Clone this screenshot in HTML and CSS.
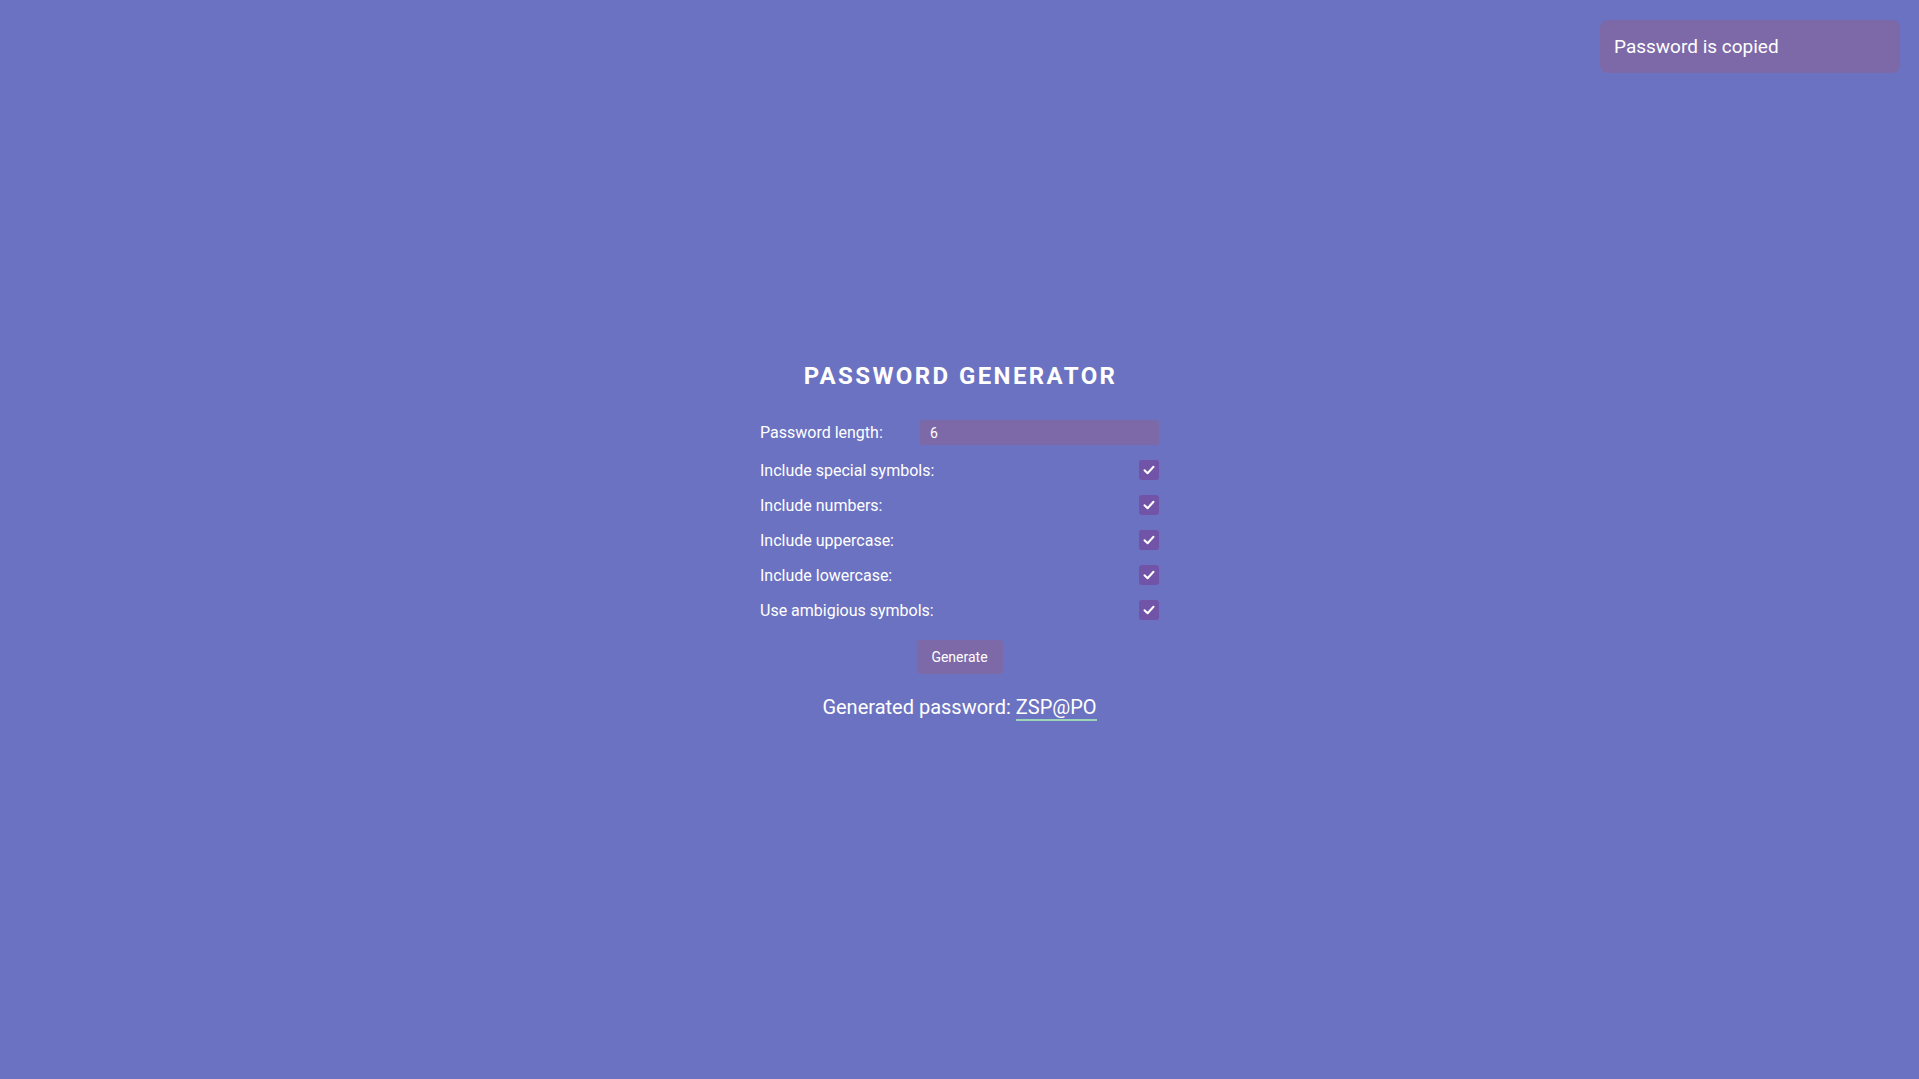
FILE: index.html
```html
<!DOCTYPE html>
<html lang="en">
<head>
<meta charset="utf-8">
<title>Password Generator</title>
<link rel="stylesheet" href="styles.css">
</head>
<body>
<div class="toast">Password is copied</div>
<main class="app">
  <h1 class="title">PASSWORD GENERATOR</h1>
  <div class="form">
    <div class="row">
      <label class="label">Password length:</label>
      <div class="input">6</div>
    </div>
    <div class="row">
      <label class="label">Include special symbols:</label>
      <span class="check"><svg viewBox="0 0 20 20" width="20" height="20"><polyline points="5.5,10.2 8.6,13.2 14.5,6.8" fill="none" stroke="#fff" stroke-width="2" stroke-linecap="round" stroke-linejoin="round"/></svg></span>
    </div>
    <div class="row">
      <label class="label">Include numbers:</label>
      <span class="check"><svg viewBox="0 0 20 20" width="20" height="20"><polyline points="5.5,10.2 8.6,13.2 14.5,6.8" fill="none" stroke="#fff" stroke-width="2" stroke-linecap="round" stroke-linejoin="round"/></svg></span>
    </div>
    <div class="row">
      <label class="label">Include uppercase:</label>
      <span class="check"><svg viewBox="0 0 20 20" width="20" height="20"><polyline points="5.5,10.2 8.6,13.2 14.5,6.8" fill="none" stroke="#fff" stroke-width="2" stroke-linecap="round" stroke-linejoin="round"/></svg></span>
    </div>
    <div class="row">
      <label class="label">Include lowercase:</label>
      <span class="check"><svg viewBox="0 0 20 20" width="20" height="20"><polyline points="5.5,10.2 8.6,13.2 14.5,6.8" fill="none" stroke="#fff" stroke-width="2" stroke-linecap="round" stroke-linejoin="round"/></svg></span>
    </div>
    <div class="row">
      <label class="label">Use ambigious symbols:</label>
      <span class="check"><svg viewBox="0 0 20 20" width="20" height="20"><polyline points="5.5,10.2 8.6,13.2 14.5,6.8" fill="none" stroke="#fff" stroke-width="2" stroke-linecap="round" stroke-linejoin="round"/></svg></span>
    </div>
  </div>
  <button class="btn">Generate</button>
  <p class="result">Generated password: <span class="pass">ZSP@PO</span></p>
</main>
</body>
</html>
```
FILE: styles.css
```css
html, body {
  margin: 0;
  height: 100%;
}
body {
  background: #6b72c1;
  font-family: Roboto, "Noto Sans", sans-serif;
  color: #fff;
  display: flex;
  align-items: center;
  justify-content: center;
}
.toast {
  position: fixed;
  top: 20px;
  right: 19px;
  width: 300px;
  box-sizing: border-box;
  height: 53px;
  padding: 0 14px;
  display: flex;
  align-items: center;
  background: #7d69a8;
  border-radius: 8px;
  font-size: 19px;
}
.app {
  width: 399px;
  display: flex;
  flex-direction: column;
  align-items: center;
  padding-top: 2px;
}
.title {
  margin: 0 0 30px;
  font-size: 24px;
  font-weight: 700;
  letter-spacing: 2.4px;
  line-height: 28px;
  padding-left: 2px;
}
.form {
  width: 100%;
  display: flex;
  flex-direction: column;
  gap: 15px;
}
.row {
  display: flex;
  align-items: center;
  justify-content: space-between;
  font-size: 16px;
}
.label {
  line-height: 19px;
}
.input {
  width: 239px;
  height: 25px;
  box-sizing: border-box;
  padding: 0 10px;
  background: #7d69a8;
  border-radius: 3px;
  font-size: 14px;
  display: flex;
  align-items: center;
}
.check {
  width: 20px;
  height: 20px;
  border-radius: 3px;
  background: #7153a8;
  display: block;
}
.check svg {
  display: block;
}
.btn {
  margin-top: 20px;
  width: 86px;
  height: 34px;
  border: none;
  border-radius: 4px;
  background: #7d69a8;
  color: #fff;
  font-family: Roboto, "Noto Sans", sans-serif;
  font-size: 14px;
  padding: 0;
}
.result {
  margin: 22px 0 0;
  font-size: 20px;
  line-height: 23px;
}
.pass {
  border-bottom: 2px solid #9bd4b6;
}
```
